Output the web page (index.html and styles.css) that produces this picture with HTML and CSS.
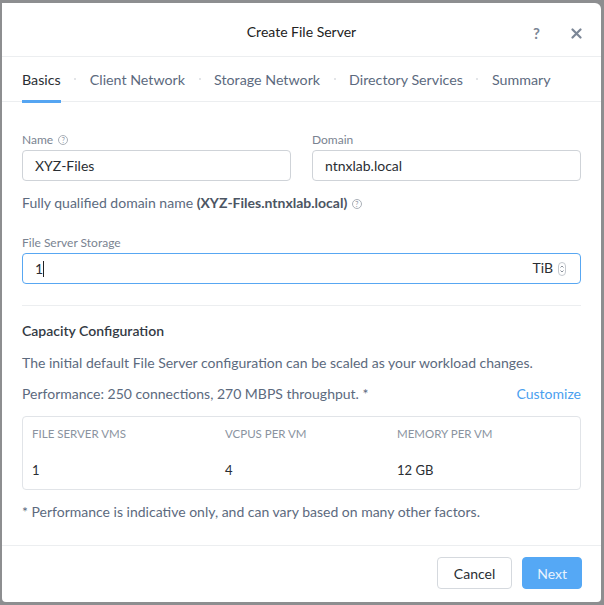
FILE: index.html
```html
<!DOCTYPE html>
<html lang="en">
<head>
    <meta charset="UTF-8">
    <title>Create File Server</title>
    <link rel="stylesheet" href="styles.css">
</head>
<body>
    <div class="modal">
        <div class="modal-header">
            <h1>Create File Server</h1>
            <div class="header-actions">
                <span class="help">?</span>
                <svg class="close" width="11" height="11" viewBox="0 0 11 11"><path d="M1.5 1.5l8 8M9.5 1.5l-8 8" stroke="#7b8696" stroke-width="2.2" stroke-linecap="round"/></svg>
            </div>
        </div>

        <div class="tabs">
            <span class="tab active">Basics</span>
            <span class="dot"></span>
            <span class="tab">Client Network</span>
            <span class="dot"></span>
            <span class="tab">Storage Network</span>
            <span class="dot"></span>
            <span class="tab">Directory Services</span>
            <span class="dot"></span>
            <span class="tab">Summary</span>
        </div>

        <div class="modal-body">
            <div class="row">
                <div class="field">
                    <label>Name <span class="info">?</span></label>
                    <div class="input">XYZ-Files</div>
                </div>
                <div class="field">
                    <label>Domain</label>
                    <div class="input">ntnxlab.local</div>
                </div>
            </div>
            <p class="fqdn">Fully qualified domain name <strong>(XYZ-Files.ntnxlab.local)</strong> <span class="info">?</span></p>

            <div class="field">
                <label>File Server Storage</label>
                <div class="input focused">
                    <span class="value">1<span class="caret"></span></span>
                    <span class="unit">TiB</span>
                    <span class="spinner">
                        <svg width="8" height="14" viewBox="0 0 8 14"><rect x="0.5" y="0.5" width="7" height="13" rx="3.5" fill="none" stroke="#c4c8ce"/><path d="M2.5 5.5l1.5-1.5 1.5 1.5M2.5 8.5l1.5 1.5 1.5-1.5" fill="none" stroke="#6b7482" stroke-width="0.8"/></svg>
                    </span>
                </div>
            </div>

            <hr>

            <h3>Capacity Configuration</h3>
            <p class="text">The initial default File Server configuration can be scaled as your workload changes.</p>
            <div class="perf">
                <span>Performance: 250 connections, 270 MBPS throughput. *</span>
                <a href="#">Customize</a>
            </div>

            <div class="table">
                <div class="thead">
                    <span>File Server VMs</span>
                    <span>vCPUs per VM</span>
                    <span>Memory per VM</span>
                </div>
                <div class="trow">
                    <span>1</span>
                    <span>4</span>
                    <span>12 GB</span>
                </div>
            </div>

            <p class="text note">* Performance is indicative only, and can vary based on many other factors.</p>
        </div>

        <div class="modal-footer">
            <button class="btn">Cancel</button>
            <button class="btn primary">Next</button>
        </div>
    </div>
</body>
</html>
```

FILE: styles.css
```css
body {
    margin: 0;
    background: #8d8e90;
    font-family: Lato, "Open Sans", sans-serif;
    padding: 3px 3px 3px 2px;
}
.modal {
    background: white;
    border-radius: 0 6px 4px 4px;
    height: 599px;
    display: flex;
    flex-direction: column;
}
.modal-header {
    height: 50px;
    padding-top: 3px;
    border-bottom: 1px solid #eceef0;
    display: flex;
    align-items: center;
    justify-content: center;
    position: relative;
}
.modal-header h1 {
    margin: 0;
    font-size: 14px;
    font-weight: normal;
    color: #222;
}
.header-actions {
    position: absolute;
    right: 19px;
    top: 23px;
    display: flex;
    align-items: center;
    gap: 31px;
}
.help {
    font-size: 15px;
    line-height: 15px;
    font-weight: bold;
    color: #7b8696;
}
.tabs {
    display: flex;
    align-items: center;
    padding: 0 20px;
    height: 44px;
    border-bottom: 1px solid #eceef0;
}
.tab {
    font-size: 14.25px;
    color: #5c6a7e;
    height: 45px;
    line-height: 43px;
    box-sizing: border-box;
    position: relative;
    top: 1px;
}
.tab.active {
    color: #2a2e33;
    border-bottom: 3px solid #55a5f2;
}
.dot {
    width: 2px;
    height: 2px;
    background: #e3e5e8;
    margin: 0 13.5px;
}
.modal-body {
    flex: 1;
    padding: 31px 20px 0 20px;
}
.row {
    display: flex;
    gap: 21px;
}
.row .field { flex: 1; }
label {
    display: block;
    font-size: 12px;
    line-height: 14px;
    color: #7a8391;
    margin-bottom: 3px;
}
.info {
    display: inline-block;
    width: 8px;
    height: 8px;
    border: 1px solid #aab0b8;
    border-radius: 50%;
    font-size: 7px;
    line-height: 8px;
    text-align: center;
    color: #8a929d;
    vertical-align: 1px;
    margin-left: 2px;
}
.input {
    height: 31px;
    box-sizing: border-box;
    border: 1px solid #cfd3d8;
    border-radius: 4px;
    padding: 0 12px;
    font-size: 14px;
    color: #2a2e33;
    display: flex;
    align-items: center;
}
.input.focused {
    border-color: #58a7f2;
    padding-right: 14px;
}
.value { flex: 1; }
.caret {
    display: inline-block;
    width: 1px;
    height: 16px;
    background: #222;
    vertical-align: -3px;
}
.unit { margin-top: -3px; }
.spinner { margin-left: 5px; display: flex; }
.fqdn {
    font-size: 14px;
    line-height: 17px;
    color: #5c6a7e;
    margin: 13px 0 25px;
}
.fqdn strong { color: #4c5563; }
.fqdn .info { margin-left: 1px; }
hr {
    border: 0;
    border-top: 1px solid #eceef0;
    margin: 21px 0 16px;
}
h3 {
    margin: 0;
    font-size: 14px;
    line-height: 17px;
    font-weight: 600;
    color: #333a44;
}
.text {
    font-size: 14px;
    line-height: 17px;
    color: #5c6a7e;
    margin: 15px 0 0;
}
.perf {
    display: flex;
    justify-content: space-between;
    font-size: 14px;
    line-height: 17px;
    color: #5c6a7e;
    margin-top: 14px;
}
.perf a {
    color: #4aa0ef;
    text-decoration: none;
}
.table {
    margin-top: 14px;
    border: 1px solid #e1e4e8;
    border-radius: 4px;
    padding: 0 9px;
}
.thead, .trow {
    display: grid;
    grid-template-columns: 193px 172px 1fr;
}
.thead {
    height: 33px;
    align-items: center;
    font-size: 11.5px;
    text-transform: uppercase;
    color: #8a93a0;
}
.trow {
    height: 39px;
    align-items: center;
    font-size: 13px;
    color: #2a2e33;
}
.note { margin-top: 13px; }
.modal-footer {
    height: 54px;
    border-top: 1px solid #eceef0;
    display: flex;
    justify-content: flex-end;
    align-items: center;
    gap: 10px;
    padding: 0 19px 2px;
}
.btn {
    height: 32px;
    border: 1px solid #d5d9de;
    border-radius: 4px;
    background: white;
    font-family: inherit;
    font-size: 14px;
    color: #2a2e33;
    padding: 0 16px;
}
.btn.primary {
    background: #55a8f5;
    border-color: #55a8f5;
    color: #e8f3fe;
    padding: 0 14px;
}
```
